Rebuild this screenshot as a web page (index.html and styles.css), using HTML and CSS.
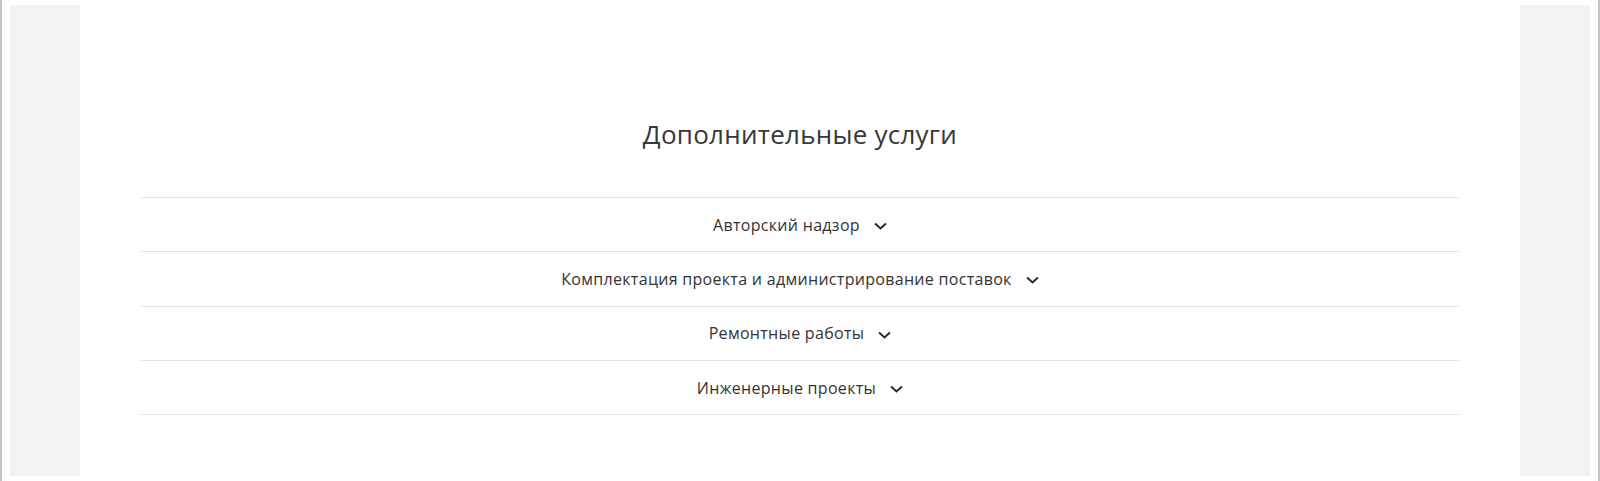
FILE: index.html
```html
<!DOCTYPE html>
<html lang="ru">
<head>
    <title>Дополнительные услуги</title>
    <meta charset="utf-8">
    <link rel="stylesheet" href="styles.css">
</head>
<body>
    <div class="frame">
        <aside class="side"></aside>
        <main class="content">
            <h2 class="title">Дополнительные услуги</h2>
            <ul class="services">
                <li class="service">
                    <span>Авторский надзор</span>
                    <svg class="chevron" width="13" height="8" viewBox="0 0 13 8"><polyline points="1,1.5 6.5,6.5 12,1.5"/></svg>
                </li>
                <li class="service">
                    <span>Комплектация проекта и администрирование поставок</span>
                    <svg class="chevron" width="13" height="8" viewBox="0 0 13 8"><polyline points="1,1.5 6.5,6.5 12,1.5"/></svg>
                </li>
                <li class="service">
                    <span>Ремонтные работы</span>
                    <svg class="chevron" width="13" height="8" viewBox="0 0 13 8"><polyline points="1,1.5 6.5,6.5 12,1.5"/></svg>
                </li>
                <li class="service">
                    <span>Инженерные проекты</span>
                    <svg class="chevron" width="13" height="8" viewBox="0 0 13 8"><polyline points="1,1.5 6.5,6.5 12,1.5"/></svg>
                </li>
            </ul>
        </main>
        <aside class="side"></aside>
    </div>
</body>
</html>
```

FILE: styles.css
```css
html, body {
    margin: 0;
    height: 100%;
    background: #fff;
}
body {
    font-family: "Open Sans", "DejaVu Sans", sans-serif;
    color: #333;
}
.frame {
    box-sizing: border-box;
    height: 481px;
    border-left: 2px solid #c4c4c4;
    border-right: 2px solid #c4c4c4;
    padding: 5px 8px;
    display: grid;
    grid-template-columns: 70px 1fr 70px;
}
.side {
    background: #f2f2f2;
}
.content {
    padding: 0 61px;
}
.title {
    margin: 113px 0 0;
    font-size: 26px;
    font-weight: 400;
    line-height: 32px;
    letter-spacing: 0.25px;
    text-align: center;
    color: #383838;
}
.services {
    list-style: none;
    margin: 47px 0 0;
    padding: 0;
    border-top: 1px solid #e2e2e2;
}
.service {
    height: 53.3px;
    display: flex;
    align-items: center;
    justify-content: center;
    gap: 14px;
    border-bottom: 1px solid #e2e2e2;
    font-size: 16px;
    letter-spacing: 0.3px;
}
.chevron {
    fill: none;
    stroke: #2b2b2b;
    stroke-width: 2;
    margin-top: 3px;
}
```
